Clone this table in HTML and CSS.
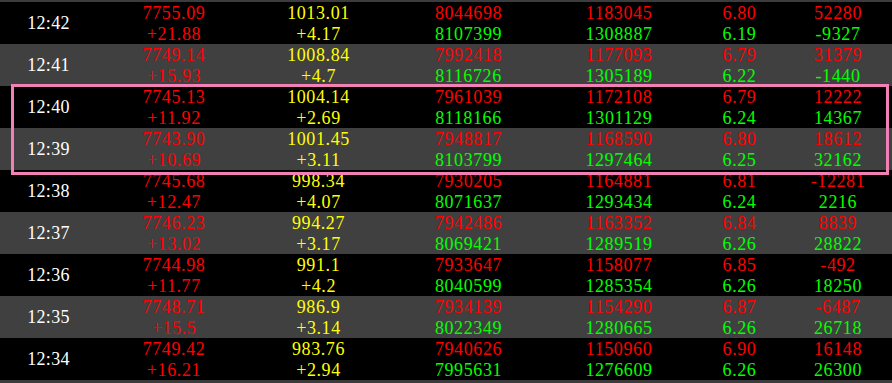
FILE: index.html
```html
<!DOCTYPE html>
<html>
<head>
<meta charset="utf-8">
<link rel="stylesheet" href="styles.css">
</head>
<body>
<div class="board">
  <div class="row dark">
    <div class="time">12:42</div>
    <div class="cell"><span class="red">7755.09</span><span class="red">+21.88</span></div>
    <div class="cell"><span class="yellow">1013.01</span><span class="yellow">+4.17</span></div>
    <div class="cell"><span class="red">8044698</span><span class="green">8107399</span></div>
    <div class="cell"><span class="red">1183045</span><span class="green">1308887</span></div>
    <div class="cell"><span class="red">6.80</span><span class="green">6.19</span></div>
    <div class="cell"><span class="red">52280</span><span class="green">-9327</span></div>
  </div>
  <div class="row light">
    <div class="time">12:41</div>
    <div class="cell"><span class="red">7749.14</span><span class="red">+15.93</span></div>
    <div class="cell"><span class="yellow">1008.84</span><span class="yellow">+4.7</span></div>
    <div class="cell"><span class="red">7992418</span><span class="green">8116726</span></div>
    <div class="cell"><span class="red">1177093</span><span class="green">1305189</span></div>
    <div class="cell"><span class="red">6.79</span><span class="green">6.22</span></div>
    <div class="cell"><span class="red">31379</span><span class="green">-1440</span></div>
  </div>
  <div class="row dark">
    <div class="time">12:40</div>
    <div class="cell"><span class="red">7745.13</span><span class="red">+11.92</span></div>
    <div class="cell"><span class="yellow">1004.14</span><span class="yellow">+2.69</span></div>
    <div class="cell"><span class="red">7961039</span><span class="green">8118166</span></div>
    <div class="cell"><span class="red">1172108</span><span class="green">1301129</span></div>
    <div class="cell"><span class="red">6.79</span><span class="green">6.24</span></div>
    <div class="cell"><span class="red">12222</span><span class="green">14367</span></div>
  </div>
  <div class="row light">
    <div class="time">12:39</div>
    <div class="cell"><span class="red">7743.90</span><span class="red">+10.69</span></div>
    <div class="cell"><span class="yellow">1001.45</span><span class="yellow">+3.11</span></div>
    <div class="cell"><span class="red">7948817</span><span class="green">8103799</span></div>
    <div class="cell"><span class="red">1168590</span><span class="green">1297464</span></div>
    <div class="cell"><span class="red">6.80</span><span class="green">6.25</span></div>
    <div class="cell"><span class="red">18612</span><span class="green">32162</span></div>
  </div>
  <div class="row dark">
    <div class="time">12:38</div>
    <div class="cell"><span class="red">7745.68</span><span class="red">+12.47</span></div>
    <div class="cell"><span class="yellow">998.34</span><span class="yellow">+4.07</span></div>
    <div class="cell"><span class="red">7930205</span><span class="green">8071637</span></div>
    <div class="cell"><span class="red">1164881</span><span class="green">1293434</span></div>
    <div class="cell"><span class="red">6.81</span><span class="green">6.24</span></div>
    <div class="cell"><span class="red">-12281</span><span class="green">2216</span></div>
  </div>
  <div class="row light">
    <div class="time">12:37</div>
    <div class="cell"><span class="red">7746.23</span><span class="red">+13.02</span></div>
    <div class="cell"><span class="yellow">994.27</span><span class="yellow">+3.17</span></div>
    <div class="cell"><span class="red">7942486</span><span class="green">8069421</span></div>
    <div class="cell"><span class="red">1163352</span><span class="green">1289519</span></div>
    <div class="cell"><span class="red">6.84</span><span class="green">6.26</span></div>
    <div class="cell"><span class="red">8839</span><span class="green">28822</span></div>
  </div>
  <div class="row dark">
    <div class="time">12:36</div>
    <div class="cell"><span class="red">7744.98</span><span class="red">+11.77</span></div>
    <div class="cell"><span class="yellow">991.1</span><span class="yellow">+4.2</span></div>
    <div class="cell"><span class="red">7933647</span><span class="green">8040599</span></div>
    <div class="cell"><span class="red">1158077</span><span class="green">1285354</span></div>
    <div class="cell"><span class="red">6.85</span><span class="green">6.26</span></div>
    <div class="cell"><span class="red">-492</span><span class="green">18250</span></div>
  </div>
  <div class="row light">
    <div class="time">12:35</div>
    <div class="cell"><span class="red">7748.71</span><span class="red">+15.5</span></div>
    <div class="cell"><span class="yellow">986.9</span><span class="yellow">+3.14</span></div>
    <div class="cell"><span class="red">7934139</span><span class="green">8022349</span></div>
    <div class="cell"><span class="red">1154290</span><span class="green">1280665</span></div>
    <div class="cell"><span class="red">6.87</span><span class="green">6.26</span></div>
    <div class="cell"><span class="red">-6487</span><span class="green">26718</span></div>
  </div>
  <div class="row dark">
    <div class="time">12:34</div>
    <div class="cell"><span class="red">7749.42</span><span class="red">+16.21</span></div>
    <div class="cell"><span class="yellow">983.76</span><span class="yellow">+2.94</span></div>
    <div class="cell"><span class="red">7940626</span><span class="green">7995631</span></div>
    <div class="cell"><span class="red">1150960</span><span class="green">1276609</span></div>
    <div class="cell"><span class="red">6.90</span><span class="green">6.26</span></div>
    <div class="cell"><span class="red">16148</span><span class="green">26300</span></div>
  </div>
  <div class="highlight"></div>
</div>
</body>
</html>
```
FILE: styles.css
```css
html, body {
  margin: 0;
  padding: 0;
  background: #3c3c3c;
}
body {
  width: 892px;
  height: 383px;
  overflow: hidden;
  font-family: "Liberation Serif", "Times New Roman", serif;
  font-size: 18px;
}
.board {
  position: relative;
  padding-top: 2px;
}
.row {
  display: grid;
  grid-template-columns: 96px 155px 134px 166px 135px 106px 91px 9px;
  height: 42px;
}
.row.dark { background: #000; }
.row.light { background: #404040; }
.time {
  color: #fff;
  display: flex;
  align-items: center;
  justify-content: center;
  padding-bottom: 1px;
  padding-left: 1px;
  letter-spacing: 0.3px;
}
.cell {
  display: flex;
  flex-direction: column;
  align-items: center;
  padding-top: 1px;
  padding-left: 1px;
  letter-spacing: 0.6px;
}
.cell span {
  line-height: 21px;
  height: 21px;
}
.red { color: #ff0000; }
.green { color: #00ff00; }
.yellow { color: #ffff00; }
.highlight {
  position: absolute;
  left: 11px;
  top: 84px;
  width: 872px;
  height: 85px;
  border: 3px solid #f27fb6;
  pointer-events: none;
}
```
